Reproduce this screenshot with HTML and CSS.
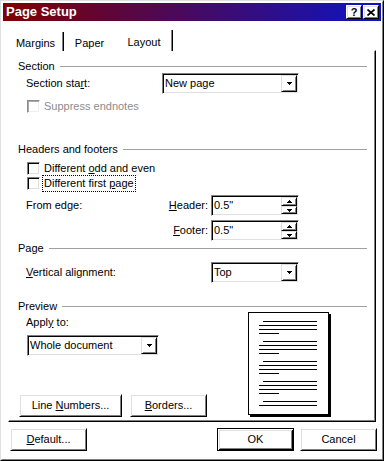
FILE: index.html
```html
<!DOCTYPE html>
<html>
<head>
<meta charset="utf-8">
<title>Page Setup</title>
<link rel="stylesheet" href="styles.css">
</head>
<body>
<div class="window">
  <div class="window-inner">
    <div class="titlebar">
      <span class="title">Page Setup</span>
      <div class="caption-btns">
        <span class="cap-btn">?</span>
        <span class="cap-btn"><svg width="8" height="7" viewBox="0 0 8 7"><path d="M0.5 0.5 L7.5 6.5 M7.5 0.5 L0.5 6.5" stroke="#000" stroke-width="1.7" fill="none"/></svg></span>
      </div>
    </div>

    <div class="tabs">
      <div class="tab">Margins</div>
      <div class="tab">Paper</div>
      <div class="tab active">Layout</div>
    </div>

    <div class="panel">
      <div class="ghead">Section</div>
      <div class="row">
        <span class="lbl lbl-section">Section sta<u>r</u>t:</span>
        <div class="field combo-section">
          <span class="val">New page</span>
          <span class="arrow-btn drop"><svg width="5" height="3" viewBox="0 0 5 3" shape-rendering="crispEdges"><rect x="0" y="0" width="5" height="1"/><rect x="1" y="1" width="3" height="1"/><rect x="2" y="2" width="1" height="1"/></svg></span>
        </div>
      </div>
      <div class="check disabled sp6"><span class="box"></span><span class="ctext">Suppress endnotes</span></div>

      <div class="ghead sp30">Headers and footers</div>
      <div class="check sp6"><span class="box"></span><span class="ctext">Different <u>o</u>dd and even</span></div>
      <div class="check sp2"><span class="box"></span><span class="ctext focus">Different first <u>p</u>age</span></div>

      <div class="edge-grid">
        <span class="lbl">From edge:</span>
        <span class="lbl right"><u>H</u>eader:</span>
        <div class="field spin">
          <span class="val">0.5"</span>
          <span class="spin-btns">
            <span class="arrow-btn up"><svg width="5" height="3" viewBox="0 0 5 3" shape-rendering="crispEdges"><rect x="2" y="0" width="1" height="1"/><rect x="1" y="1" width="3" height="1"/><rect x="0" y="2" width="5" height="1"/></svg></span>
            <span class="arrow-btn down"><svg width="5" height="3" viewBox="0 0 5 3" shape-rendering="crispEdges"><rect x="0" y="0" width="5" height="1"/><rect x="1" y="1" width="3" height="1"/><rect x="2" y="2" width="1" height="1"/></svg></span>
          </span>
        </div>
        <span></span>
        <span class="lbl right"><u>F</u>ooter:</span>
        <div class="field spin">
          <span class="val">0.5"</span>
          <span class="spin-btns">
            <span class="arrow-btn up"><svg width="5" height="3" viewBox="0 0 5 3" shape-rendering="crispEdges"><rect x="2" y="0" width="1" height="1"/><rect x="1" y="1" width="3" height="1"/><rect x="0" y="2" width="5" height="1"/></svg></span>
            <span class="arrow-btn down"><svg width="5" height="3" viewBox="0 0 5 3" shape-rendering="crispEdges"><rect x="0" y="0" width="5" height="1"/><rect x="1" y="1" width="3" height="1"/><rect x="2" y="2" width="1" height="1"/></svg></span>
          </span>
        </div>
      </div>

      <div class="ghead sp1">Page</div>
      <div class="row sp7">
        <span class="lbl lbl-valign"><u>V</u>ertical alignment:</span>
        <div class="field combo-valign">
          <span class="val">Top</span>
          <span class="arrow-btn drop"><svg width="5" height="3" viewBox="0 0 5 3" shape-rendering="crispEdges"><rect x="0" y="0" width="5" height="1"/><rect x="1" y="1" width="3" height="1"/><rect x="2" y="2" width="1" height="1"/></svg></span>
        </div>
      </div>

      <div class="ghead sp17">Preview</div>
      <div class="preview-row">
        <div class="pv-left">
          <span class="lbl apply-lbl">Appl<u>y</u> to:</span>
          <div class="field combo-apply">
            <span class="val">Whole document</span>
            <span class="arrow-btn drop"><svg width="5" height="3" viewBox="0 0 5 3" shape-rendering="crispEdges"><rect x="0" y="0" width="5" height="1"/><rect x="1" y="1" width="3" height="1"/><rect x="2" y="2" width="1" height="1"/></svg></span>
          </div>
          <div class="pv-btns">
            <span class="pbtn wide"><span>Line <u>N</u>umbers...</span></span>
            <span class="pbtn"><span><u>B</u>orders...</span></span>
          </div>
        </div>
        <svg class="page-preview" width="83" height="105" viewBox="0 0 83 105" shape-rendering="crispEdges">
          <rect x="81" y="2" width="2" height="103" fill="#000"/>
          <rect x="2" y="103" width="81" height="2" fill="#000"/>
          <rect x="0.5" y="0.5" width="80" height="102" fill="#fff" stroke="#000" stroke-width="1"/>
          <g fill="#000">
            <rect x="15" y="9" width="54" height="1"/><rect x="11" y="13" width="58" height="1"/><rect x="11" y="17" width="58" height="1"/><rect x="11" y="21" width="20" height="1"/>
            <rect x="15" y="29" width="54" height="1"/><rect x="11" y="33" width="58" height="1"/><rect x="11" y="37" width="58" height="1"/><rect x="11" y="41" width="20" height="1"/>
            <rect x="15" y="49" width="54" height="1"/><rect x="11" y="53" width="58" height="1"/><rect x="11" y="57" width="58" height="1"/><rect x="11" y="61" width="20" height="1"/>
            <rect x="15" y="69" width="54" height="1"/><rect x="11" y="73" width="58" height="1"/><rect x="11" y="77" width="58" height="1"/><rect x="11" y="81" width="20" height="1"/>
            <rect x="15" y="89" width="54" height="1"/><rect x="11" y="93" width="58" height="1"/>
          </g>
        </svg>
      </div>
    </div>

    <div class="bottom">
      <span class="pbtn"><span><u>D</u>efault...</span></span>
      <span class="spacer"></span>
      <span class="pbtn default"><span>OK</span></span>
      <span class="pbtn"><span>Cancel</span></span>
    </div>
  </div>
</div>
</body>
</html>
```

FILE: styles.css
```css
* { box-sizing: border-box; }
html, body { margin: 0; padding: 0; background: #fff; }
body {
  font-family: "Liberation Sans", Arial, sans-serif;
  font-size: 11px;
  line-height: 13px;
  color: #000;
}
u { text-decoration: underline; text-underline-offset: 1px; }

.window {
  width: 384px;
  height: 461px;
  border: 1px solid;
  border-color: #dfdfdf #000 #000 #dfdfdf;
  background: #fff;
}
.window-inner {
  height: 100%;
  border: 1px solid;
  border-color: #fff #808080 #808080 #fff;
  padding: 1px;
}

.titlebar {
  height: 18px;
  display: flex;
  justify-content: space-between;
  align-items: flex-start;
  background: linear-gradient(to right, #800000, #0c14c4);
  color: #fff;
}
.title {
  font-weight: bold;
  font-size: 13px;
  line-height: 18px;
  padding-left: 3px;
  white-space: nowrap;
}
.caption-btns {
  display: flex;
  gap: 1px;
  margin: 2px 2px 0 0;
}
.cap-btn {
  width: 16px;
  height: 14px;
  display: flex;
  align-items: center;
  justify-content: center;
  background: #fff;
  color: #000;
  font-weight: bold;
  font-size: 11px;
  line-height: 11px;
  border: 1px solid;
  border-color: #fff #000 #000 #fff;
  box-shadow: inset 1px 1px 0 #dfdfdf, inset -1px -1px 0 #808080;
}

.tabs {
  display: flex;
  align-items: flex-start;
  height: 21px;
  margin: 9px 0 -1px 7px;
  position: relative;
  z-index: 1;
}
.tab {
  width: 54px;
  height: 19px;
  margin-top: 2px;
  padding: 5px 2px 0 0;
  text-align: center;
  white-space: nowrap;
  background: #fff;
  border-right: 1px solid #000;
  box-shadow: inset -1px 0 0 #808080;
}
.tab.active {
  width: 57px;
  height: 21px;
  margin-top: 0;
  margin-left: -2px;
  padding: 6px 0 0 0;
  position: relative;
  z-index: 2;
}

.panel {
  height: 372px;
  margin: 0 5px;
  border: 1px solid;
  border-color: #fff #000 #000 #fff;
  box-shadow: inset -1px -1px 0 #808080;
  padding: 9px 1px 0 1px;
}

.ghead {
  display: flex;
  align-items: center;
  height: 13px;
  margin: 0 7px 0 8px;
  white-space: nowrap;
}
.ghead::after {
  content: "";
  flex: 1;
  height: 1px;
  margin-left: 5px;
  background: #a0a0a0;
}

.sp1 { margin-top: 1px; }
.sp2 { margin-top: 2px; }
.sp6 { margin-top: 6px; }
.sp7 { margin-top: 7px; }
.sp17 { margin-top: 17px; }
.sp30 { margin-top: 30px; }

.row {
  display: flex;
  align-items: center;
  margin-left: 16px;
}
.lbl { white-space: nowrap; }
.lbl-section { width: 136px; }
.lbl-valign { width: 185px; }

.field {
  height: 21px;
  display: flex;
  align-items: center;
  padding: 1px;
  background: #fff;
  border: 1px solid;
  border-color: #808080 #fff #fff #808080;
  box-shadow: inset 1px 1px 0 #000, inset -1px -1px 0 #dfdfdf;
}
.field .val {
  flex: 1;
  padding-left: 1px;
  white-space: nowrap;
}
.combo-section { width: 137px; }
.combo-valign { width: 88px; }
.combo-apply { width: 132px; margin: 6px 0 0 17px; }
.spin { width: 88px; }

.arrow-btn {
  display: flex;
  align-items: center;
  justify-content: center;
  width: 16px;
  background: #fff;
  border: 1px solid;
  border-color: #dfdfdf #000 #000 #dfdfdf;
  box-shadow: inset 1px 1px 0 #fff, inset -1px -1px 0 #808080;
}
.arrow-btn svg { display: block; fill: #000; }
.arrow-btn.drop { height: 17px; }
.spin-btns {
  display: flex;
  flex-direction: column;
  height: 17px;
}
.arrow-btn.up { height: 9px; }
.arrow-btn.down { height: 8px; }

.check {
  display: flex;
  align-items: center;
  height: 13px;
  margin-left: 17px;
}
.box {
  flex: none;
  width: 13px;
  height: 13px;
  margin-right: 4px;
  background: #fff;
  border: 1px solid;
  border-color: #808080 #fff #fff #808080;
  box-shadow: inset 1px 1px 0 #000, inset -1px -1px 0 #dfdfdf;
}
.check.disabled .box {
  border-color: #8c8c8c #fff #fff #8c8c8c;
  box-shadow: inset 1px 1px 0 #a8a8a8, inset -1px -1px 0 #eee;
}
.check.disabled .ctext { color: #8c8c8c; }
.ctext { white-space: nowrap; }
.ctext.focus {
  display: inline-block;
  margin-left: -2px;
  padding: 1px 1px 1px 1px;
  border: 1px dotted #000;
  line-height: 13px;
}

.edge-grid {
  display: grid;
  grid-template-columns: 140px 45px 88px;
  row-gap: 4px;
  align-items: center;
  margin: 5px 0 0 16px;
}
.lbl.right {
  text-align: right;
  padding-right: 3px;
}

.preview-row {
  display: flex;
  margin-top: -1px;
}
.pv-left {
  width: 238px;
  display: flex;
  flex-direction: column;
  align-items: flex-start;
}
.apply-lbl {
  height: 13px;
  margin: 4px 0 0 16px;
}
.pv-btns {
  display: flex;
  gap: 8px;
  margin: 38px 0 0 9px;
}
.page-preview { display: block; flex: none; }

.pbtn {
  width: 77px;
  height: 23px;
  display: flex;
  align-items: center;
  justify-content: center;
  white-space: nowrap;
  background: #fff;
  border: 1px solid;
  border-color: #fff #000 #000 #fff;
  box-shadow: inset 1px 1px 0 #dfdfdf, inset -1px -1px 0 #808080;
}
.pbtn.wide { width: 103px; }
.pbtn.default {
  border-color: #000;
  box-shadow: inset 1px 1px 0 #fff, inset -1px -1px 0 #000, inset 2px 2px 0 #dfdfdf, inset -2px -2px 0 #808080;
}

.bottom {
  display: flex;
  margin: 6px 4px 0 7px;
}
.bottom .spacer { flex: 1; }
.bottom .pbtn.default { margin-right: 6px; }
```
